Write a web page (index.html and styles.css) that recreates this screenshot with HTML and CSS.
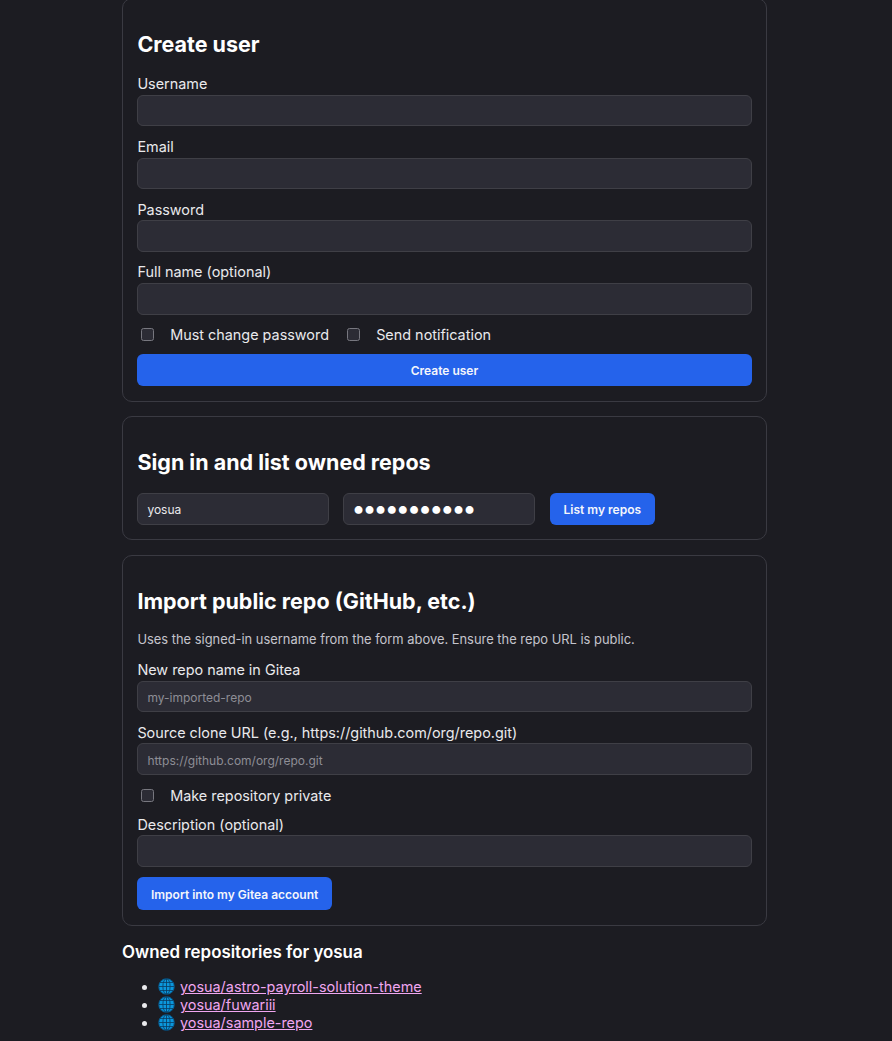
FILE: index.html
```html
<!DOCTYPE html>
<html lang="en">
<head>
    <meta charset="UTF-8">
    <meta name="viewport" content="width=device-width, initial-scale=1.0">
    <title>Gitea users</title>
    <link rel="stylesheet" href="styles.css">
</head>
<body>

<svg class="defs" width="0" height="0">
    <symbol id="globe" viewBox="0 0 16 16">
        <circle cx="8" cy="8" r="7.6" fill="#0b97dc"/>
        <g fill="none" stroke="#0a3f66" stroke-width="0.8">
            <circle cx="8" cy="8" r="7.4"/>
            <ellipse cx="8" cy="8" rx="3.4" ry="7.4"/>
            <path d="M8 .6v14.8M.6 8h14.8M1.8 4.2h12.4M1.8 11.8h12.4"/>
        </g>
    </symbol>
</svg>

<div class="container">
    <section class="card">
        <h2>Create user</h2>
        <label class="field-label" for="username">Username</label>
        <input type="text" id="username">
        <label class="field-label" for="email">Email</label>
        <input type="text" id="email">
        <label class="field-label" for="password">Password</label>
        <input type="text" id="password">
        <label class="field-label" for="fullName">Full name (optional)</label>
        <input type="text" id="fullName">
        <div class="check-row">
            <label class="check"><input type="checkbox">Must change password</label>
            <label class="check"><input type="checkbox">Send notification</label>
        </div>
        <button class="btn btn-full">Create user</button>
    </section>

    <section class="card">
        <h2>Sign in and list owned repos</h2>
        <div class="signin-row">
            <input type="text" value="yosua">
            <input type="password" value="abcdefghijk">
            <button class="btn">List my repos</button>
        </div>
    </section>

    <section class="card">
        <h2>Import public repo (GitHub, etc.)</h2>
        <p class="hint">Uses the signed-in username from the form above. Ensure the repo URL is public.</p>
        <label class="field-label" for="repoName">New repo name in Gitea</label>
        <input type="text" id="repoName" placeholder="my-imported-repo">
        <label class="field-label" for="cloneUrl">Source clone URL (e.g., https://github.com/org/repo.git)</label>
        <input type="text" id="cloneUrl" placeholder="https://github.com/org/repo.git">
        <div class="check-row">
            <label class="check"><input type="checkbox">Make repository private</label>
        </div>
        <label class="field-label" for="description">Description (optional)</label>
        <input type="text" id="description">
        <button class="btn btn-import">Import into my Gitea account</button>
    </section>

    <h3>Owned repositories for yosua</h3>
    <ul class="repos">
        <li><svg class="globe"><use href="#globe"/></svg><a href="#">yosua/astro-payroll-solution-theme</a></li>
        <li><svg class="globe"><use href="#globe"/></svg><a href="#">yosua/fuwariii</a></li>
        <li><svg class="globe"><use href="#globe"/></svg><a href="#">yosua/sample-repo</a></li>
    </ul>
</div>

</body>
</html>
```

FILE: styles.css
```css
html {
    height: 100%;
    overflow: hidden;
}

body {
    font-family: Inter, 'Liberation Sans', sans-serif;
    background-color: #1c1c22;
    color: #e9e9ec;
    margin: 0;
    font-size: 14.4px;
    line-height: 21.6px;
}

.defs {
    display: block;
}

.container {
    width: 645px;
    margin: -1.8px 0 0 122px;
}

.card {
    border: 1px solid #3a3a42;
    border-radius: 10px;
    padding: 14.4px;
    margin-bottom: 14.4px;
}

h2 {
    font-size: 21.5px;
    line-height: 30px;
    font-weight: 700;
    color: #fff;
    margin: 15.4px 0 14.4px;
}

h3 {
    font-size: 16.9px;
    line-height: 24px;
    font-weight: 600;
    color: #fff;
    margin: 0 0 14.2px;
}

.field-label {
    display: block;
}

input[type="text"],
input[type="password"] {
    display: block;
    box-sizing: border-box;
    width: 100%;
    height: 31.5px;
    margin: 0 0 9.6px;
    padding: 2px 9px 0;
    font-family: inherit;
    font-size: 12px;
    color: #e9e9ec;
    background-color: #2c2c35;
    border: 1px solid #3f3f46;
    border-radius: 6px;
}

input::placeholder {
    color: #8e8e96;
}

.check-row {
    display: flex;
    gap: 14.4px;
    height: 21.6px;
    margin-bottom: 7.4px;
}

.check {
    display: flex;
    align-items: center;
}

.check input {
    appearance: none;
    box-sizing: border-box;
    width: 13px;
    height: 13px;
    margin: 0 16.2px 0 3.6px;
    background-color: #2c2c35;
    border: 1px solid #77777f;
    border-radius: 2.5px;
}

.btn {
    height: 32.4px;
    padding: 2px 13.6px 0;
    font-family: inherit;
    font-size: 12px;
    font-weight: 600;
    color: #f4f6fb;
    background-color: #2563eb;
    border: none;
    border-radius: 6px;
}

.btn-full {
    display: block;
    width: 100%;
    margin-top: 8px;
}

.btn-import {
    display: block;
    height: 33px;
    margin-top: 10.6px;
}

.signin-row {
    display: flex;
    gap: 14px;
    margin-top: 16px;
}

.signin-row input[type="text"],
.signin-row input[type="password"] {
    width: 192px;
    height: 32.4px;
    margin: 0;
}

.signin-row input[type="password"] {
    padding: 0 7px 2px;
    font-size: 25px;
    letter-spacing: -2.95px;
    color: #fff;
}

.signin-row .btn {
    margin-left: 0.6px;
}

.hint {
    font-size: 12.9px;
    line-height: 19px;
    color: #c4c4cc;
    margin: 0 0 10.2px;
}

.repos {
    margin: 0;
    padding-left: 36px;
    line-height: 18px;
}

.repos li {
    height: 18px;
}

.globe {
    width: 17px;
    height: 17px;
    margin-right: 5px;
    vertical-align: -3px;
}

.repos a {
    color: #f0a6f0;
}
```
